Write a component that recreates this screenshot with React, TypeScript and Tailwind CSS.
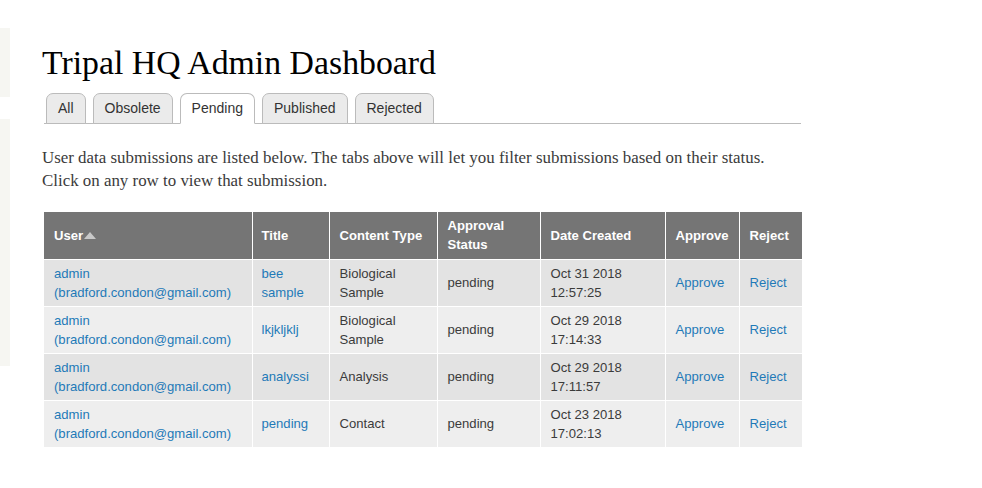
import React from "react";

const rows = [
  { title: ["bee", "sample"], type: ["Biological", "Sample"], date: ["Oct 31 2018", "12:57:25"] },
  { title: ["lkjkljklj"], type: ["Biological", "Sample"], date: ["Oct 29 2018", "17:14:33"] },
  { title: ["analyssi"], type: ["Analysis"], date: ["Oct 29 2018", "17:11:57"] },
  { title: ["pending"], type: ["Contact"], date: ["Oct 23 2018", "17:02:13"] },
];

const tabs = ["All", "Obsolete", "Pending", "Published", "Rejected"];

export default function App() {
  return (
    <div className="flex min-h-[488px] w-[982px] bg-white">
      <div className="flex w-[10px] flex-col pt-[28px]">
        <div className="h-[69px] bg-[#f6f6f2]" />
        <div className="mt-[22px] h-[247px] bg-[#f6f6f2]" />
      </div>
      <div className="ml-[32px] flex w-[760px] flex-col">
        <h1
          className="mt-[44px] text-[33.8px] leading-[38px] text-[#000]"
          style={{ fontFamily: '"Liberation Serif", serif' }}
        >
          Tripal HQ Admin Dashboard
        </h1>
        <ul
          className="mt-[11px] ml-[2px] flex w-[757px] gap-[7px] border-b border-[#bbbbbb] pl-[2px]"
          style={{ fontFamily: '"Liberation Sans", Arial, sans-serif' }}
        >
          {tabs.map((t) => (
            <li
              key={t}
              className={`-mb-px flex h-[31px] items-center rounded-t-[7px] border border-[#bbbbbb] px-[11px] text-[14px] text-[#333] ${
                t === "Pending" ? "border-b-white bg-white" : "bg-[#ebebeb]"
              }`}
            >
              {t}
            </li>
          ))}
        </ul>
        <p
          className="mt-[22px] whitespace-nowrap text-[16.9px] leading-[23px] text-[#3b3b3b]"
          style={{ fontFamily: '"Liberation Serif", serif' }}
        >
          User data submissions are listed below. The tabs above will let you filter submissions based on their status.
          <br />
          Click on any row to view that submission.
        </p>
        <table
          className="mt-[20px] ml-[2px] w-[758px] table-fixed border-collapse text-[13.1px] leading-[19px]"
          style={{ fontFamily: '"Liberation Sans", Arial, sans-serif' }}
        >
          <colgroup>
            <col className="w-[208px]" />
            <col className="w-[77px]" />
            <col className="w-[108px]" />
            <col className="w-[103px]" />
            <col className="w-[125px]" />
            <col className="w-[74px]" />
            <col className="w-[63px]" />
          </colgroup>
          <thead>
            <tr className="h-[47px] bg-[#757575] text-left font-bold text-white">
              <th className="border border-white border-t-0 border-l-0 pl-[10px]">
                <span className="inline-flex items-center">
                  User
                  <svg width="12" height="7" viewBox="0 0 12 7" className="ml-[1px]">
                    <path d="M0 7 L6 0 L12 7 Z" fill="#c8c8c8" />
                  </svg>
                </span>
              </th>
              <th className="border border-white border-t-0 pl-[9px]">Title</th>
              <th className="border border-white border-t-0 pl-[10px]">Content Type</th>
              <th className="border border-white border-t-0 pl-[10px]">
                Approval
                <br />
                Status
              </th>
              <th className="border border-white border-t-0 pl-[10px]">Date Created</th>
              <th className="border border-white border-t-0 pl-[10px]">Approve</th>
              <th className="border border-white border-t-0 border-r-0 pl-[10px]">Reject</th>
            </tr>
          </thead>
          <tbody className="text-[#3b3b3b]">
            {rows.map((r, i) => (
              <tr key={i} className={`h-[47px] ${i % 2 === 0 ? "bg-[#e3e3e3]" : "bg-[#eeeeee]"}`}>
                <td className="border border-white border-l-0 pl-[10px] text-[#1f7ab8]">
                  admin
                  <br />
                  (bradford.condon@gmail.com)
                </td>
                <td className="border border-white pl-[9px] text-[#1f7ab8]">
                  {r.title.map((x, j) => (
                    <React.Fragment key={j}>
                      {j > 0 && <br />}
                      {x}
                    </React.Fragment>
                  ))}
                </td>
                <td className="border border-white pl-[10px]">
                  {r.type.map((x, j) => (
                    <React.Fragment key={j}>
                      {j > 0 && <br />}
                      {x}
                    </React.Fragment>
                  ))}
                </td>
                <td className="border border-white pl-[10px]">pending</td>
                <td className="border border-white pl-[10px]">
                  {r.date[0]}
                  <br />
                  {r.date[1]}
                </td>
                <td className="border border-white pl-[10px] text-[#1f7ab8]">Approve</td>
                <td className="border border-white border-r-0 pl-[10px] text-[#1f7ab8]">Reject</td>
              </tr>
            ))}
          </tbody>
        </table>
      </div>
    </div>
  );
}
